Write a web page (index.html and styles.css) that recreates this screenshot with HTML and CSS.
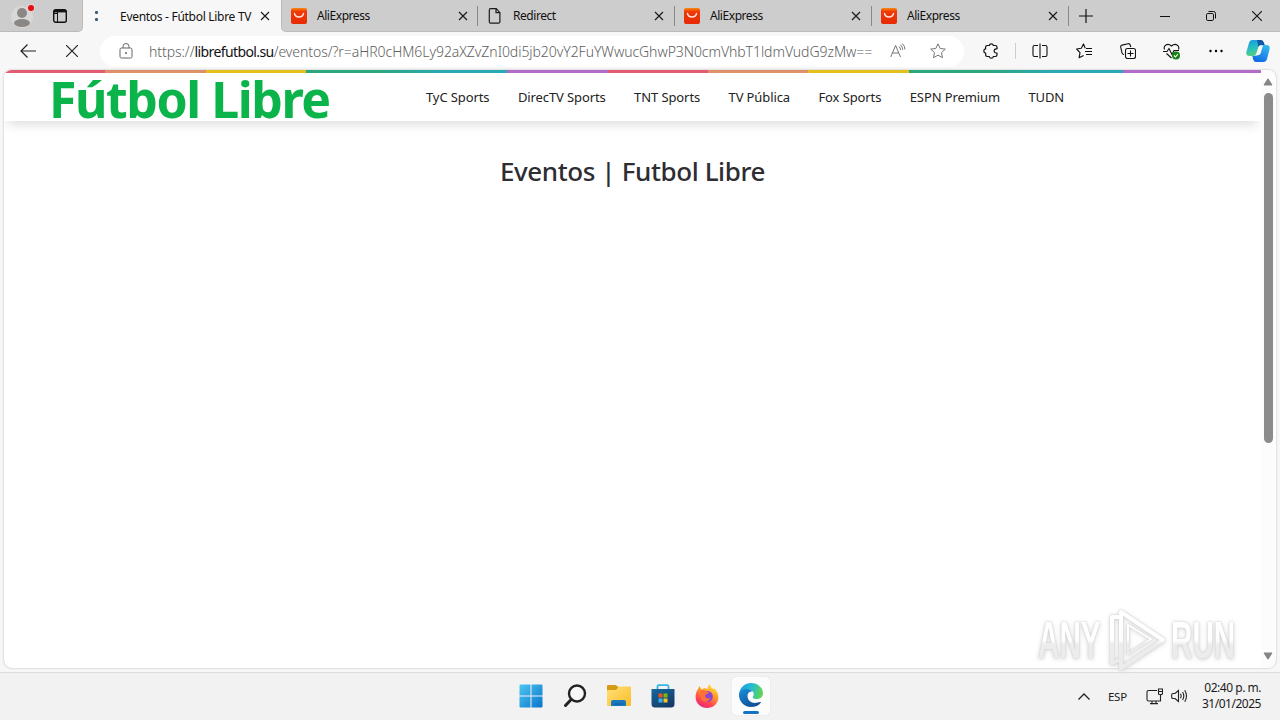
FILE: index.html
```html
<!DOCTYPE html>
<html lang="es">
<head>
    <meta charset="UTF-8">
    <meta name="viewport" content="width=device-width, initial-scale=1.0">
    <title>Eventos - Fútbol Libre TV</title>
    <link rel="stylesheet" href="styles.css">
</head>
<body>
    <!-- Shared symbols -->
    <svg class="defs" width="0" height="0">
        <defs>
            <linearGradient id="ali-bg" x1="0" y1="0" x2="0" y2="1">
                <stop offset="0" stop-color="#f58a10"/><stop offset=".22" stop-color="#f03a08"/><stop offset="1" stop-color="#e62a04"/>
            </linearGradient>
            <symbol id="ali" viewBox="0 0 16 16">
                <rect width="16" height="16" rx="2" fill="url(#ali-bg)"/>
                <path d="M3.500 5.500c1 4.700 8 4.700 9 0" fill="none" stroke="#ffe9df" stroke-width="1.400" stroke-linecap="round"/>
            </symbol>
            <symbol id="close" viewBox="0 0 10 10">
                <path d="M1 1l8 8M9 1l-8 8" fill="none" stroke="#1b1b1b" stroke-width="1.200"/>
            </symbol>
        </defs>
    </svg>

    <div class="tabbar">
        <div class="tab-tools">
            <svg class="avatar" width="26" height="26" viewBox="0 0 26 26">
                <circle cx="12" cy="15" r="11" fill="#d8d8d8"/>
                <circle cx="12" cy="11" r="5" fill="#8b8785"/>
                <ellipse cx="12" cy="21" rx="8" ry="4" fill="#8b8785"/>
                <circle cx="21" cy="6" r="4" fill="#e9cccc"/>
                <circle cx="21" cy="6" r="3" fill="#e01010"/>
            </svg>
            <svg class="tab-actions" width="14" height="14" viewBox="0 0 14 14" fill="none" stroke="#111">
                <rect x=".7" y=".7" width="12.600" height="12.600" rx="2" stroke-width="1.400"/>
                <path d="M1 2.200h12" stroke-width="2.400"/>
                <path d="M4.500 3v10M1 4.500h3.500"/>
            </svg>
        </div>
        <div class="tab active">
            <span class="favicon dots-icon"><i></i><i></i></span>
            <span class="tab-title">Eventos - Fútbol Libre TV</span>
            <svg class="tab-close" width="10" height="10"><use href="#close"/></svg>
        </div>
        <div class="tab-strip">
            <div class="tab">
                <svg class="favicon" width="16" height="16"><use href="#ali"/></svg>
                <span class="tab-title">AliExpress</span>
                <svg class="tab-close" width="10" height="10"><use href="#close"/></svg>
            </div>
            <div class="tab">
                <svg class="favicon" width="16" height="16" viewBox="0 0 16 16">
                    <path d="M3.500.7h5.700l3.700 4v9q0 1.500-1.500 1.500h-7.900q-1.200 0-1.200-1.500v-11.500q0-1.500 1.200-1.500zM9 .8v3.900h3.900" fill="none" stroke="#1b1b1b" stroke-width="1.200"/>
                </svg>
                <span class="tab-title">Redirect</span>
                <svg class="tab-close" width="10" height="10"><use href="#close"/></svg>
            </div>
            <div class="tab">
                <svg class="favicon" width="16" height="16"><use href="#ali"/></svg>
                <span class="tab-title">AliExpress</span>
                <svg class="tab-close" width="10" height="10"><use href="#close"/></svg>
            </div>
            <div class="tab">
                <svg class="favicon" width="16" height="16"><use href="#ali"/></svg>
                <span class="tab-title">AliExpress</span>
                <svg class="tab-close" width="10" height="10"><use href="#close"/></svg>
            </div>
            <svg class="new-tab" width="14" height="14" viewBox="0 0 14 14"><path d="M7 0v14M0 7h14" stroke="#111" stroke-width="1.200"/></svg>
            <div class="window-controls">
                <span><svg width="10" height="10" viewBox="0 0 10 10"><path d="M0 5.500h10" stroke="#111"/></svg></span>
                <span><svg width="10" height="10" viewBox="0 0 10 10" fill="none" stroke="#111"><rect x=".5" y="2.500" width="7" height="7" rx="1.300"/><path d="M2.500.5h5q2 0 2 2v5"/></svg></span>
                <span><svg width="10" height="10" viewBox="0 0 10 10"><path d="M0 0l10 10M10 0L0 10" stroke="#111" stroke-width="1.100"/></svg></span>
            </div>
        </div>
    </div>

    <div class="toolbar">
        <span class="tool"><svg width="16" height="14" viewBox="0 0 16 14"><path d="M16 7H1M7.500.5L1 7l6.500 6.500" fill="none" stroke="#222" stroke-width="1.200"/></svg></span>
        <span class="tool"><svg width="12" height="12" viewBox="0 0 12 12"><path d="M0 0l12 12M12 0L0 12" stroke="#222" stroke-width="1.200"/></svg></span>
        <div class="address">
            <span class="tool lock"><svg width="14" height="16" viewBox="0 0 14 16" fill="none" stroke="#666"><rect x="1" y="5" width="12" height="10" rx="1.500"/><path d="M4 5V3.500a3 3 0 0 1 6 0V5"/><circle cx="7" cy="10" r=".6" fill="#666"/></svg></span>
            <span class="url">https://<b>librefutbol.su</b>/eventos/?r=aHR0cHM6Ly92aXZvZnI0di5jb20vY2FuYWwucGhwP3N0cmVhbT1ldmVudG9zMw==</span>
            <span class="tool read"><svg width="16" height="16" viewBox="0 0 16 16" fill="none" stroke="#767676"><path d="M.7 14L5.600 2.500 10.500 14M2.500 10h6.200"/><path d="M9 3.500q1.500 1.500 1.500 3.500M10.500 1.800q2.200 2 2.200 5M12.200.5q2.800 2.500 2.800 6"/></svg></span>
            <span class="tool star"><svg width="16" height="16" viewBox="0 0 16 16" fill="none" stroke="#767676" stroke-linejoin="round"><path d="M8 .8l2.200 4.700 5.100.6-3.800 3.500 1 5.100L8 12.200l-4.500 2.500 1-5.100L.7 6.100l5.100-.6z"/></svg></span>
        </div>
        <span class="tool"><svg width="16" height="16" viewBox="0 0 16 16" fill="none" stroke="#111" stroke-width="1.200" stroke-linejoin="round"><path d="M4.300 2.500h2q.2-1.700 2-1.700t2 1.700h2q1.700 0 1.700 1.700v1.600h-1q-1.900.3-1.900 2.100t1.900 2.100h1v1.800q0 1.700-1.700 1.700h-2q-.2 1.700-2 1.700t-2-1.700h-2q-1.700 0-1.700-1.700V10Q.8 9.800.8 7.900t1.800-2.100V4.200q0-1.700 1.700-1.700z"/></svg></span>
        <span class="divider"></span>
        <span class="tool"><svg width="16" height="16" viewBox="0 0 16 16" fill="none" stroke="#111" stroke-width="1.100"><path d="M6 2.500H2.500q-1.500 0-1.500 1.500v8q0 1.500 1.500 1.500H6M10 2.500h3.500q1.500 0 1.500 1.500v8q0 1.500-1.500 1.500H10M8 .5v15"/></svg></span>
        <span class="tool"><svg width="16" height="16" viewBox="0 0 16 16" fill="none" stroke="#111" stroke-width="1.100" stroke-linejoin="round"><path d="M9.200 5.200L7.500.9 5.300 5.300.6 6l3.400 3.600-.9 5.200 4.500-2.300M10 5.500h6M9 8.500h7M10 11.500h6"/></svg></span>
        <span class="tool"><svg width="16" height="16" viewBox="0 0 16 16" fill="none" stroke="#111" stroke-width="1.100"><path d="M4 11.500q-1.500-.2-2-1.700L.7 4.200Q.4 2.600 2 2.100L8 .7q1.700-.3 2.200 1.300l.5 2"/><rect x="5.500" y="5.500" width="10" height="10" rx="2"/><path d="M10.500 7.500v6M7.500 10.500h6"/></svg></span>
        <span class="tool"><svg width="18" height="17" viewBox="0 0 18 17" fill="none" stroke="#111" stroke-width="1.100"><path d="M1.500 6.500C0 2.500 4.500-.5 8.500 3 12.500-.5 17 2.500 15.500 6.500M3.500 10.500l5 4.500M0 8.500h4l2-3 3 6 2-4h5"/><circle cx="13" cy="12.500" r="4" fill="#168216" stroke="none"/><path d="M11 12.500l1.500 1.500 2.500-3" stroke="#fff"/></svg></span>
        <span class="tool"><svg width="14" height="4" viewBox="0 0 14 4"><circle cx="1.500" cy="2" r="1.200"/><circle cx="7" cy="2" r="1.200"/><circle cx="12.500" cy="2" r="1.200"/></svg></span>
        <span class="tool copilot">
            <svg width="24" height="24" viewBox="0 0 24 24">
                <defs>
                    <linearGradient id="cop-a" x1="0" y1="0" x2=".3" y2="1"><stop offset="0" stop-color="#1596e0"/><stop offset=".5" stop-color="#24bcc4"/><stop offset="1" stop-color="#53cf83"/></linearGradient>
                    <linearGradient id="cop-b" x1=".7" y1="0" x2=".3" y2="1"><stop offset="0" stop-color="#32b9ee"/><stop offset="1" stop-color="#1168e4"/></linearGradient>
                </defs>
                <path d="M6.500 1h8.500q2 0 2.800 2.500l.8 2.500h-3.500q-2 0-2.700 2l-2 6.500q-.8 2.500-3 2.500H3.500q-4 0-3-4.500L3 4q.8-3 3.500-3z" fill="url(#cop-a)"/>
                <path d="M11 1h4q2 0 2.800 2.500l.8 2.500h-3.500q-2 0-2.700 2z" fill="#1555a8"/>
                <path d="M17.500 23H10q-2 0-2.800-2.500L6.300 17h2.400q2.200 0 3-2.500L13.700 8q.7-2 2.700-2h4.100q4 0 3 4.500L21 20q-.8 3-3.500 3z" fill="url(#cop-b)"/>
                <path d="M13 7L10 16.500l3-.5q1.200-.4 1.600-1.700L17 6.500h-2.500z" fill="#f7f7f7"/>
            </svg>
        </span>
    </div>

    <div class="viewport">
        <div class="page">
            <div class="rainbow"></div>
            <header class="site-header">
                <div class="logo">Fútbol Libre</div>
                <nav class="menu">
                    <a>TyC Sports</a>
                    <a>DirecTV Sports</a>
                    <a>TNT Sports</a>
                    <a>TV Pública</a>
                    <a>Fox Sports</a>
                    <a>ESPN Premium</a>
                    <a>TUDN</a>
                </nav>
            </header>
            <h1>Eventos | Futbol Libre</h1>
        </div>
        <div class="scrollbar">
            <svg width="10" height="8" viewBox="0 0 10 8"><path d="M5 .8L9 7H1z" fill="#858585" stroke="#858585" stroke-linejoin="round"/></svg>
            <div class="thumb"></div>
            <svg class="down" width="10" height="8" viewBox="0 0 10 8"><path d="M5 7.200L9 1H1z" fill="#858585" stroke="#858585" stroke-linejoin="round"/></svg>
        </div>
    </div>

    <div class="taskbar">
        <div class="apps">
            <span class="app">
                <svg width="24" height="24" viewBox="0 0 24 24">
                    <defs><linearGradient id="win" gradientUnits="userSpaceOnUse" x1="0" y1="0" x2="24" y2="24"><stop offset="0" stop-color="#4fc8f2"/><stop offset="1" stop-color="#0872cb"/></linearGradient></defs>
                    <path d="M.5 1.500q0-1 1-1h10v11H.5zM12.500.5h10q1 0 1 1v10h-11zM.5 12.500h11v11h-10q-1 0-1-1zM12.500 12.500h11v10q0 1-1 1h-10z" fill="url(#win)"/>
                </svg>
            </span>
            <span class="app">
                <svg width="24" height="24" viewBox="0 0 24 24" fill="none"><circle cx="14" cy="9.500" r="8" fill="#f5f7f8" stroke="#222" stroke-width="2.400"/><path d="M8.200 15.500L2.500 21.500" stroke="#222" stroke-width="3" stroke-linecap="round"/></svg>
            </span>
            <span class="app">
                <svg width="24" height="24" viewBox="0 0 24 24">
                    <defs><linearGradient id="fold" x1="0" y1="0" x2="1" y2="1"><stop offset="0" stop-color="#ffe07b"/><stop offset="1" stop-color="#fbbd27"/></linearGradient></defs>
                    <path d="M0 2q0-1 1-1h7q1 0 1.700.8L11.500 3H23q1 0 1 1v5H0z" fill="#d59a16"/>
                    <path d="M0 7q0-1 1-1h8l3-3.500h11q1 0 1 1V21q0 1-1 1H1q-1 0-1-1z" fill="url(#fold)"/>
                    <path d="M4 22v-4q0-2 2-2h11q2 0 2 2v4z" fill="#1879bf"/><path d="M7 20h9" stroke="#125a93" stroke-width="1"/>
                </svg>
            </span>
            <span class="app">
                <svg width="24" height="24" viewBox="0 0 24 24">
                    <defs><linearGradient id="store" x1="0" y1="0" x2=".6" y2="1"><stop offset="0" stop-color="#14699f"/><stop offset="1" stop-color="#173b68"/></linearGradient></defs>
                    <path d="M6.500 6V2.500q0-1.300 1.300-1.300h8.400q1.300 0 1.300 1.300V6" fill="none" stroke="#36b5e7" stroke-width="1.800"/>
                    <path d="M.5 5h23v15q0 3.500-3.500 3.500H4Q.5 23.500.5 20z" fill="url(#store)"/>
                    <path d="M7.500 9.500h4v4h-4z" fill="#f25022"/><path d="M12.500 9.500h4v4h-4z" fill="#7fba00"/><path d="M7.500 14.500h4v4h-4z" fill="#37b5ed"/><path d="M12.500 14.500h4v4h-4z" fill="#ffc020"/>
                </svg>
            </span>
            <span class="app">
                <svg width="24" height="24" viewBox="0 0 24 24">
                    <defs><linearGradient id="fox" x1=".8" y1="0" x2=".3" y2="1"><stop offset="0" stop-color="#fff04c"/><stop offset=".4" stop-color="#ff9d28"/><stop offset=".75" stop-color="#ff4550"/><stop offset="1" stop-color="#e52882"/></linearGradient></defs>
                    <path d="M3 5l1.500-3 2 3.500 3-1.500 3 1q-.5-3 2-5 1 3.500 4 5l1-.5q4 4 3.900 9C23 20 18 24 12 24S.8 19.500.6 13.500Q.5 8 3 5z" fill="url(#fox)"/>
                    <circle cx="12.300" cy="12.500" r="5.500" fill="#8a46d3"/>
                    <path d="M5 7q3-2 6 .5l3 .7q-.5 2-3 2-1.500 1.500-.5 3 2 2.500 5 .6-1.500 4-5.500 4Q4.500 17 5 7z" fill="#ff7139"/>
                </svg>
            </span>
            <span class="app current">
                <svg width="26" height="26" viewBox="0 0 26 26">
                    <defs>
                        <linearGradient id="edge-top" x1="0" y1=".3" x2="1" y2=".5"><stop offset="0" stop-color="#1e9de0"/><stop offset=".5" stop-color="#25bcd0"/><stop offset="1" stop-color="#63d64b"/></linearGradient>
                        <linearGradient id="edge-low" x1="0" y1="0" x2=".7" y2="1"><stop offset="0" stop-color="#1b8ed8"/><stop offset="1" stop-color="#114c95"/></linearGradient>
                    </defs>
                    <path d="M1 12C2 5 7 1 13 1c7 0 12 5 12 10 0 4-3 6-6.500 6-3 0-4.500-1.200-3.500-2.500 2.500-3.500-1-7-5-7-4 0-8 2.200-9 4.500z" fill="url(#edge-top)"/>
                    <path d="M1 12c1-3 4-5 8-5 2.500 0 4.500 1 5.500 2.500-3-.5-5 1.500-5 4.500 0 5 5 8 10 6.500 2-.6 3.500-1 3.500 0C21 23.500 17 25 13 25 6 25 .5 19 1 12z" fill="url(#edge-low)"/>
                </svg>
            </span>
        </div>
        <div class="tray">
            <svg class="chevron" width="12" height="7" viewBox="0 0 12 7"><path d="M.5 6.500L6 1l5.500 5.500" fill="none" stroke="#222" stroke-width="1.300"/></svg>
            <span class="lang">ESP</span>
            <svg class="network" width="17" height="17" viewBox="0 0 17 17" fill="none" stroke="#222" stroke-width="1.100"><path d="M11 2.500H2.500q-1.500 0-1.500 1.500v7.500q0 1.500 1.500 1.500h12V7M6 13v2.500M10 13v2.500M4 15.600h8M12.500 1h4v4.500q0 1-1 1h-2q-1 0-1-1zM12.500 3.500h4"/></svg>
            <svg class="volume" width="17" height="16" viewBox="0 0 17 16" fill="none" stroke="#222" stroke-width="1.100"><path d="M7.500 2.500L4 5.500H2Q.7 5.500.7 6.800v2.400q0 1.300 1.300 1.300h2l3.500 3zM9.500 5.700q1.200 2.300 0 4.600M11.600 4q2.400 4 0 8M13.700 2.300q3.600 5.700 0 11.400"/></svg>
            <div class="clock"><span>02:40 p. m.</span><span>31/01/2025</span></div>
        </div>
    </div>

    <div class="watermark">
        <span class="any">ANY</span>
        <svg width="58" height="64" viewBox="0 0 58 64" fill="none" stroke="url(#mark)" stroke-width="4" stroke-linejoin="round">
            <defs><linearGradient id="mark" gradientUnits="userSpaceOnUse" x1="0" y1="0" x2="0" y2="64"><stop offset=".5" stop-color="#fff"/><stop offset=".56" stop-color="#ececec"/></linearGradient></defs>
            <path d="M11 9H4v46l7-3"/>
            <path d="M13 4v56l42-28z"/>
            <path d="M20 17v29l23-15z" stroke-width="2"/>
        </svg>
        <span class="run">RUN</span>
    </div>
</body>
</html>
```
FILE: styles.css
```css
* {
    box-sizing: border-box;
}
body {
    margin: 0;
    width: 1280px;
    height: 720px;
    overflow: hidden;
    display: flex;
    flex-direction: column;
    background: #f7f7f7;
    font-family: "Noto Sans", "Open Sans", sans-serif;
    color: #1b1b1b;
}
svg {
    display: block;
    flex-shrink: 0;
}
.defs {
    position: absolute;
}

/* Tabs */
.tabbar {
    display: flex;
    height: 32px;
    flex-shrink: 0;
}
.tab-tools {
    width: 83px;
    display: flex;
    background: #cdcdcd;
    border-right: 1px solid #bbb;
    border-bottom: 1px solid #bbb;
    border-radius: 0 0 5px 0;
}
.avatar {
    margin: 2px 0 0 10px;
}
.tab-actions {
    margin: 9px 0 0 17px;
}
.tab {
    width: 197px;
    display: flex;
    align-items: center;
    padding: 0 10px 0 9px;
    border-right: 1px solid transparent;
    font-size: 12px;
    white-space: nowrap;
}
.tab.active {
    width: 198px;
    padding: 0 10px 0 5px;
}
.tab-title {
    flex: 1;
    margin-left: 10px;
    color: #111;
    letter-spacing: -0.45px;
}
.active .tab-title {
    margin-left: 16px;
    letter-spacing: -0.29px;
}
.dots-icon {
    width: 16px;
    display: flex;
    flex-direction: column;
    align-items: center;
    gap: 4px;
}
.dots-icon i {
    width: 3px;
    height: 3px;
    border-radius: 1px;
    background: #35617f;
}
.tab-strip {
    flex: 1;
    display: flex;
    align-items: center;
    background: #cdcdcd;
    border-left: 1px solid #bbb;
    border-bottom: 1px solid #bbb;
    border-radius: 0 0 0 5px;
}
.tab-strip .tab {
    height: 20px;
    border-right-color: #8a8a8a;
}
.tab-strip .tab:first-child {
    width: 196px;
    padding-right: 9px;
}
.new-tab {
    margin-left: 10px;
}
.window-controls {
    display: flex;
    margin-left: auto;
}
.window-controls span {
    width: 46px;
    display: flex;
    justify-content: center;
}

/* Toolbar */
.toolbar {
    height: 38px;
    flex-shrink: 0;
    display: flex;
    align-items: center;
    padding-left: 6px;
}
.tool {
    width: 44px;
    display: flex;
    justify-content: center;
    flex-shrink: 0;
}
.address {
    width: 864px;
    height: 31px;
    margin: 0 5px 0 6px;
    padding-left: 4px;
    display: flex;
    align-items: center;
    background: #fff;
    border-radius: 16px;
}
.url {
    width: 728px;
    padding-left: 1px;
    font-size: 14px;
    font-weight: 300;
    letter-spacing: -0.06px;
    color: #606060;
    white-space: nowrap;
}
.url b {
    font-weight: normal;
    letter-spacing: -0.6px;
    color: #111;
}
.star {
    width: 36px;
}
.divider {
    width: 1px;
    height: 16px;
    margin: 0 2px;
    background: #ccc;
}
.copilot {
    width: 40px;
}

/* Page */
.viewport {
    width: 1272px;
    height: 598px;
    margin: 0 4px;
    flex-shrink: 0;
    display: flex;
    background: #fff;
    border-radius: 8px;
    box-shadow: 0 0 2px #aaa;
    overflow: hidden;
}
.page {
    width: 1257px;
}
.rainbow {
    height: 3px;
    background: linear-gradient(90deg, #e25b72 101px, #de9069 101px 202px, #e4c01d 202px 302px, #2ba77b 302px 370px, #29a9b4 440px 503px, #b36bca 503px 604px, #e25b72 604px 704px, #de9069 704px 804px, #e4c01d 804px 905px, #2ba77b 905px 980px, #29a9b4 1050px 1119px, #b36bca 1119px);
}
.site-header {
    height: 48px;
    display: flex;
    align-items: center;
    background: #fff;
    box-shadow: 0 8px 10px -4px rgba(0, 0, 0, .13);
}
.logo {
    width: 375px;
    padding: 3px 0 0 45px;
    font-size: 50px;
    font-weight: bold;
    letter-spacing: -1.45px;
    color: #0bb44a;
    white-space: nowrap;
}
.menu {
    display: flex;
    gap: 28.4px;
    padding-left: 47px;
    font-size: 13px;
    letter-spacing: -0.1px;
    white-space: nowrap;
    color: #222;
}
h1 {
    margin: 32px 0 0;
    text-align: center;
    font-size: 26px;
    font-weight: 500;
    letter-spacing: -0.4px;
    line-height: 36px;
    color: #2d2d32;
}
.scrollbar {
    width: 14px;
    display: flex;
    flex-direction: column;
    align-items: center;
    padding: 8px 0;
    background: #fcfcfc;
}
.thumb {
    width: 9px;
    height: 350px;
    margin-top: 7px;
    border-radius: 5px;
    background: #8b8b8b;
}
.down {
    margin-top: auto;
}

/* Taskbar */
.taskbar {
    height: 48px;
    margin-top: 4px;
    flex-shrink: 0;
    display: flex;
    background: #f2f2f2;
    border-top: 1px solid #dcdcdc;
}
.apps {
    display: flex;
    align-items: center;
    padding: 0 0 2px 509px;
}
.app {
    width: 44px;
    height: 40px;
    display: flex;
    align-items: center;
    justify-content: center;
}
.current {
    width: 38px;
    height: 38px;
    margin-left: 3px;
    flex-direction: column;
    background: #fcfcfc;
    border-radius: 4px;
    box-shadow: 0 0 1px #ccc;
}
.current::after {
    content: "";
    width: 16px;
    height: 3px;
    margin: 3px 0 -5px;
    border-radius: 2px;
    background: #1473c5;
}
.tray {
    margin-left: auto;
    padding: 0 19px 1px 0;
    display: flex;
    align-items: center;
    font-size: 12px;
}
.lang {
    margin-left: 18px;
    font-size: 11.5px;
    letter-spacing: -0.2px;
}
.network {
    margin-left: 19px;
}
.volume {
    margin-left: 8px;
}
.clock {
    margin-left: 14px;
    display: flex;
    flex-direction: column;
    align-items: flex-end;
    line-height: 16px;
    letter-spacing: -0.48px;
}

/* Watermark over the desktop */
.watermark {
    position: absolute;
    left: 1038px;
    top: 608px;
    display: flex;
    align-items: center;
    font-family: "Liberation Sans", sans-serif;
    font-size: 52px;
    font-weight: bold;
    line-height: 64px;
    filter: drop-shadow(0 0 1px #ccc) drop-shadow(0 1px 2px #ddd);
}
.watermark span {
    width: 112px;
    margin-right: -49px;
    transform: scaleX(.57);
    transform-origin: 0 50%;
    color: transparent;
    background: linear-gradient(#fff 50%, #ececec 58%);
    -webkit-background-clip: text;
    background-clip: text;
}
.watermark svg {
    margin: 0 5px 0 7px;
}
```
